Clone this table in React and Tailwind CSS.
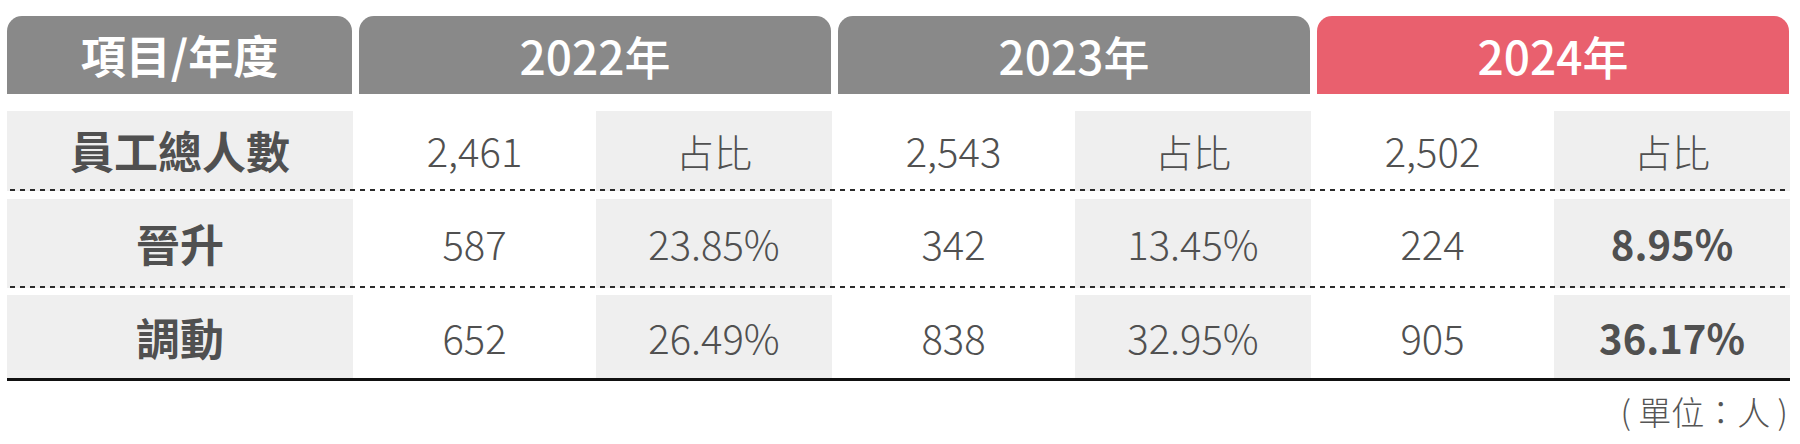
import React from 'react';

const YEARS = [
  { label: '2022年', total: '2,461', rows: [['587', '23.85%'], ['652', '26.49%']], bold: false, header: 'bg-[#898989]' },
  { label: '2023年', total: '2,543', rows: [['342', '13.45%'], ['838', '32.95%']], bold: false, header: 'bg-[#898989]' },
  { label: '2024年', total: '2,502', rows: [['224', '8.95%'], ['905', '36.17%']], bold: true, header: 'bg-[#e9606e]' },
];

const ROWS = [
  { label: '晉升', height: 'h-[95px] pt-[8px]' },
  { label: '調動', height: 'h-[90px] pt-[7px]' },
];

const dash = 'bg-[repeating-linear-gradient(90deg,#2a2a2a_0_5px,transparent_5px_10px)] bg-fixed';

function Separator() {
  return (
    <div className="flex h-[2px]">
      <div className={`w-[346px] bg-[#efefef] ${dash}`} />
      {YEARS.map((y) => (
        <React.Fragment key={y.label}>
          <div className={`w-[243px] bg-white ${dash}`} />
          <div className={`w-[236px] bg-[#efefef] ${dash}`} />
        </React.Fragment>
      ))}
    </div>
  );
}

export default function App() {
  return (
    <div className="w-[1800px] h-[444px] bg-white pl-[7px] pt-[16px] font-['Noto_Sans_CJK_TC','Noto_Sans',sans-serif] text-[#505050]">
      <div className="w-[1783px]">
        {/* ── 表頭 ── */}
        <div className="flex h-[78px]">
          <div className="w-[345px] rounded-t-[15px] bg-[#898989] flex items-center justify-center text-white text-[45px] font-bold">
            項目/年度
          </div>
          {YEARS.map((y) => (
            <div key={y.label} className="w-[479px] pl-[7px]">
              <div className={`h-full rounded-t-[15px] ${y.header} flex items-center justify-center text-white text-[46px] font-medium`}>
                {y.label}
              </div>
            </div>
          ))}
        </div>

        {/* ── 員工總人數 ── */}
        <div className="flex h-[82px] mt-[13px] pt-[4px]">
          <div className="w-[346px] bg-[#efefef] flex items-center justify-center text-[44px] font-bold">員工總人數</div>
          {YEARS.map((y) => (
            <React.Fragment key={y.label}>
              <div className="w-[243px] bg-white flex items-center justify-center text-[40px] font-light">{y.total}</div>
              <div className="w-[236px] bg-[#efefef] flex items-center justify-center text-[38px] font-light">占比</div>
            </React.Fragment>
          ))}
        </div>
        <Separator />

        {ROWS.map((r, i) => (
          <React.Fragment key={r.label}>
            <div className={`flex ${r.height}`}>
              <div className="w-[346px] bg-[#efefef] flex items-center justify-center text-[44px] font-bold">{r.label}</div>
              {YEARS.map((y) => (
                <React.Fragment key={y.label}>
                  <div className="w-[243px] bg-white flex items-center justify-center text-[40px] font-light">{y.rows[i][0]}</div>
                  <div className={`w-[236px] bg-[#efefef] flex items-center justify-center text-[40px] ${y.bold ? 'font-semibold' : 'font-light'}`}>
                    {y.rows[i][1]}
                  </div>
                </React.Fragment>
              ))}
            </div>
            {i === 0 && <Separator />}
          </React.Fragment>
        ))}

        <div className="h-[3px] bg-[#111]" />

        <div className="flex justify-end pr-[2px] mt-[8px] text-[33px] leading-[44px] font-light text-[#555]">
          ( 單位：人 )
        </div>
      </div>
    </div>
  );
}
